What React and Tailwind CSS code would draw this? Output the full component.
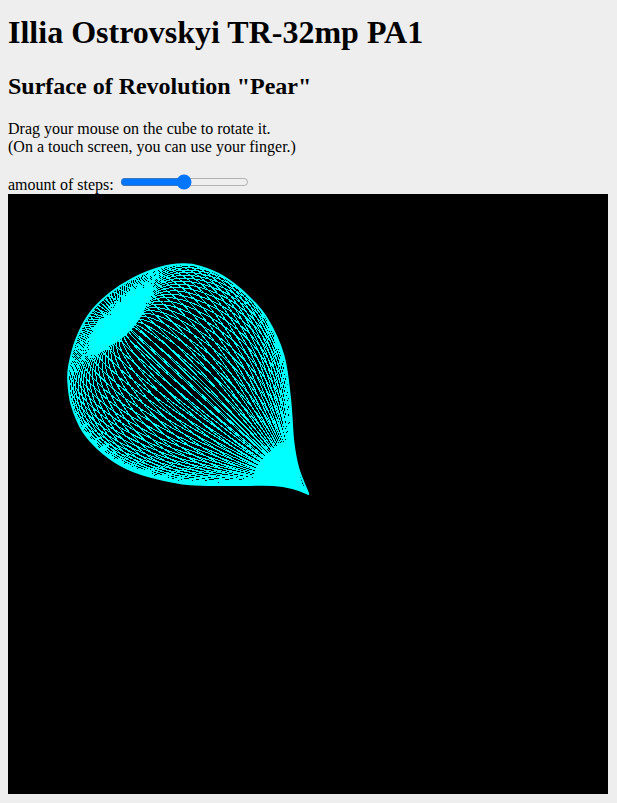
const T = [308, 494];
const AX = [-0.734, -0.68];
const PR = [0.68, -0.734];
const K = 0.38;

const profile = [
  [0, 0], [15, 5], [31, 17], [46, 30], [78, 58], [112, 84], [150, 102], [180, 109],
  [210, 107], [235, 96], [253, 80], [261, 60], [259, 38], [254, 0],
];

function cr(p0, p1, p2, p3, f) {
  return 0.5 * (2 * p1 + (p2 - p0) * f + (2 * p0 - 5 * p1 + 4 * p2 - p3) * f * f + (3 * p1 - p0 - 3 * p2 + p3) * f * f * f);
}

function sample(t) {
  const n = profile.length;
  const x = t * (n - 1);
  const i = Math.min(Math.floor(x), n - 2);
  const f = x - i;
  const a = profile[Math.max(i - 1, 0)];
  const b = profile[i];
  const c = profile[i + 1];
  const d = profile[Math.min(i + 2, n - 1)];
  return [cr(a[0], b[0], c[0], d[0], f), Math.max(cr(a[1], b[1], c[1], d[1], f), 0)];
}

function point(t, th) {
  const [a, r] = sample(t);
  const al = a + K * r * Math.sin(th);
  const pe = r * Math.cos(th);
  const x = T[0] + AX[0] * al + PR[0] * pe - 8;
  const y = T[1] + AX[1] * al + PR[1] * pe - 194;
  return `${x.toFixed(1)} ${y.toFixed(1)}`;
}

function meridians(M, offset, from, to, N) {
  let d = "";
  for (let j = 0; j < M; j++) {
    const th = ((j + offset) / M) * Math.PI * 2;
    d += "M" + point(from, th);
    for (let i = 1; i <= N; i++) {
      d += "L" + point(from + ((to - from) * i) / N, th);
    }
  }
  return d;
}

const raw = [
  [745, 717], [715, 640], [700, 560], [690, 430], [670, 300], [620, 190], [560, 120], [490, 65],
  [420, 35], [370, 28], [300, 38], [220, 70], [150, 115], [90, 175], [50, 250], [28, 330],
  [25, 380], [35, 450], [70, 530], [130, 595], [200, 640], [290, 670], [390, 688], [520, 690],
  [640, 690], [700, 700], [745, 717],
].map(([x, y]) => [60 + x / 3 - 8, 255 + y / 3 - 194]);

function smoothPath(pts) {
  let d = `M${pts[0][0].toFixed(1)} ${pts[0][1].toFixed(1)}`;
  for (let i = 0; i < pts.length - 1; i++) {
    const p0 = pts[Math.max(i - 1, 0)];
    const p1 = pts[i];
    const p2 = pts[i + 1];
    const p3 = pts[Math.min(i + 2, pts.length - 1)];
    const c1 = [p1[0] + (p2[0] - p0[0]) / 6, p1[1] + (p2[1] - p0[1]) / 6];
    const c2 = [p2[0] - (p3[0] - p1[0]) / 6, p2[1] - (p3[1] - p1[1]) / 6];
    d += `C${c1[0].toFixed(1)} ${c1[1].toFixed(1)} ${c2[0].toFixed(1)} ${c2[1].toFixed(1)} ${p2[0].toFixed(1)} ${p2[1].toFixed(1)}`;
  }
  return d + "Z";
}

const outline = smoothPath(raw);
const mesh = meridians(96, 0.12, 0, 1, 78);
const tipMesh = meridians(192, 0.7, 0, 0.23, 20);
const poleMesh = meridians(120, 0.4, 0.925, 1, 8);

export default function App() {
  return (
    <div className="min-h-[803px] bg-[#eeeeee] px-2 pb-2 text-black font-['Liberation_Serif',serif] text-base leading-[18px]">
      <h1 className="pt-[14px] text-[32px] font-bold leading-[37px] mb-[22px]">Illia Ostrovskyi TR-32mp PA1</h1>
      <h2 className="text-2xl font-bold leading-[27px] mb-5">Surface of Revolution "Pear"</h2>
      <p>Drag your mouse on the cube to rotate it.</p>
      <p className="mb-[18px]">(On a touch screen, you can use your finger.)</p>
      <div className="h-[20px]">
        amount of steps: <input type="range" min="0" max="100" defaultValue="50" className="mx-[2px]" />
      </div>
      <div className="w-[600px] h-[600px] bg-black">
        <svg width="600" height="600" viewBox="0 0 600 600" className="block">
          <defs>
            <clipPath id="pear">
              <path d={outline} />
            </clipPath>
          </defs>
          <g clipPath="url(#pear)">
            <path d={mesh} fill="none" stroke="#00ffff" strokeWidth="1" shapeRendering="crispEdges" />
            <path d={tipMesh} fill="none" stroke="#00ffff" strokeWidth="1" shapeRendering="crispEdges" />
            <path d={poleMesh} fill="none" stroke="#00ffff" strokeWidth="1" shapeRendering="crispEdges" />
            <ellipse cx="114" cy="128" rx="33" ry="12" fill="#00ffff" transform="rotate(-47 114 128)" />
          </g>
          <path d={outline} fill="none" stroke="#00ffff" strokeWidth="2" strokeLinejoin="round" />
        </svg>
      </div>
    </div>
  );
}
